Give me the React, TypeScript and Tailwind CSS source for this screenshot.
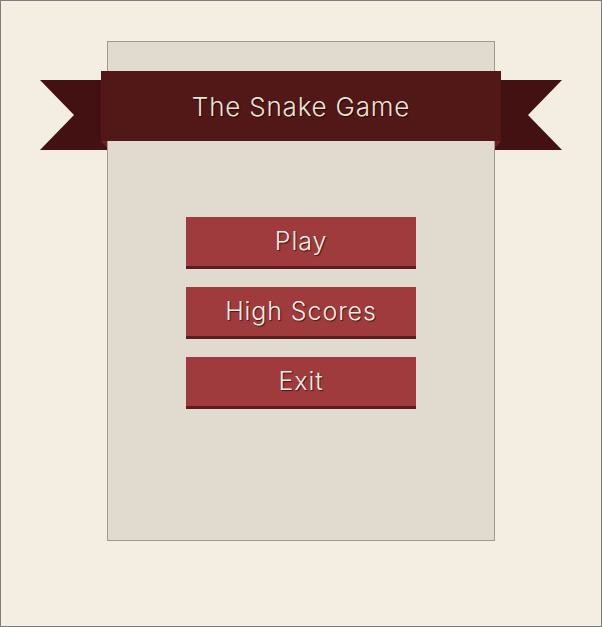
export default function App() {
    const buttons = ['Play', 'High Scores', 'Exit'];

    return (
        <div className="w-[602px] h-[627px] bg-[#f4ede2] border border-[#7d7d7d] pt-[40px] pl-[106px] font-['Inter','Liberation_Sans',sans-serif] font-light">
            <div className="w-[388px] h-[500px] bg-[#e1dbcf] border border-[#9e9a90] pt-[29px]">
                {/* Ribbon */}
                <div className="relative mx-[-7px]">
                    <svg className="absolute left-[-61px] top-[9px]" width="67" height="70" viewBox="0 0 67 70">
                        <polygon points="0,0 67,0 67,70 0,70 34,35" fill="#431111" />
                        <polygon points="61,61 67,61 67,68" fill="#6e1f1f" />
                    </svg>
                    <svg className="absolute right-[-61px] top-[9px]" width="67" height="70" viewBox="0 0 67 70">
                        <polygon points="0,0 67,0 33,35 67,70 0,70" fill="#431111" />
                        <polygon points="0,61 6,61 0,68" fill="#6e1f1f" />
                    </svg>
                    <div className="relative h-[70px] bg-[#521717] flex items-center justify-center">
                        <h1 className="text-[26px] text-[#ebe3d7] tracking-[0.8px] [text-shadow:1px_1px_1px_rgba(0,0,0,0.6)]">
                            The Snake Game
                        </h1>
                    </div>
                </div>

                {/* Menu */}
                <div className="flex flex-col items-center gap-[18px] mt-[76px]">
                    {buttons.map((label) => (
                        <button
                            key={label}
                            className="w-[230px] h-[52px] bg-[#9f3a3d] border-b-[3px] border-[#5e1c1c] text-[25px] text-[#f4ece2] tracking-[0.9px] [text-shadow:1px_1px_1px_rgba(0,0,0,0.6)] flex items-center justify-center"
                        >
                            {label}
                        </button>
                    ))}
                </div>
            </div>
        </div>
    );
}
